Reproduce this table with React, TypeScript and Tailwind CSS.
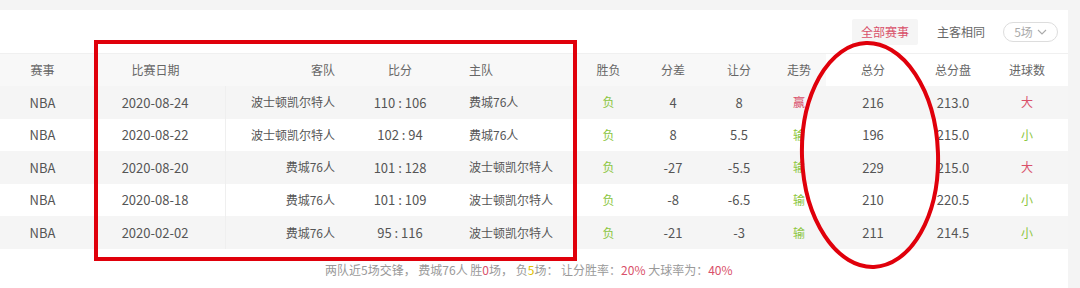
import React from 'react';

type Row = {
  league: string;
  date: string;
  away: string;
  score: string;
  home: string;
  result: string;
  diff: string;
  spread: string;
  trend: string;
  total: string;
  line: string;
  ou: string;
};

const rows: Row[] = [
  { league: 'NBA', date: '2020-08-24', away: '波士顿凯尔特人', score: '110 : 106', home: '费城76人', result: '负', diff: '4', spread: '8', trend: '赢', total: '216', line: '213.0', ou: '大' },
  { league: 'NBA', date: '2020-08-22', away: '波士顿凯尔特人', score: '102 : 94', home: '费城76人', result: '负', diff: '8', spread: '5.5', trend: '输', total: '196', line: '215.0', ou: '小' },
  { league: 'NBA', date: '2020-08-20', away: '费城76人', score: '101 : 128', home: '波士顿凯尔特人', result: '负', diff: '-27', spread: '-5.5', trend: '输', total: '229', line: '215.0', ou: '大' },
  { league: 'NBA', date: '2020-08-18', away: '费城76人', score: '101 : 109', home: '波士顿凯尔特人', result: '负', diff: '-8', spread: '-6.5', trend: '输', total: '210', line: '220.5', ou: '小' },
  { league: 'NBA', date: '2020-02-02', away: '费城76人', score: '95 : 116', home: '波士顿凯尔特人', result: '负', diff: '-21', spread: '-3', trend: '输', total: '211', line: '214.5', ou: '小' },
];

const RED = 'text-[#d9506a]';
const GREEN = 'text-[#8cc63f]';

// 赢 / 大 are red, everything else green
const tone = (v: string) => (v === '赢' || v === '大' ? RED : GREEN);

const App: React.FC = () => {
  return (
    <div
      className="relative w-[1080px] h-[288px] overflow-hidden bg-[#f4f4f4] pt-[10px] pr-[12px] text-[12px] text-[#555]"
      style={{ fontFamily: '"Noto Sans CJK SC", "Noto Sans", sans-serif' }}
    >
      <div className="h-full bg-white flex flex-col">
        {/* filters */}
        <div className="h-[43px] flex items-center justify-end pr-[10px]">
          <button className="h-[26px] px-[9px] bg-[#f5f5f5] text-[#d9506a] rounded-[2px]">全部赛事</button>
          <button className="h-[26px] px-[9px] ml-[10px] text-[#666]">主客相同</button>
          <button className="h-[20px] w-[55px] ml-[9px] border border-[#ddd] rounded-full text-[#aaa] flex items-center justify-center gap-[4px]">
            5场
            <svg width="10" height="6" viewBox="0 0 10 6" fill="none" stroke="#aaa" strokeWidth="1.1">
              <path d="M1 1l4 4 4-4" />
            </svg>
          </button>
        </div>

        {/* header */}
        <div className="flex h-[33px] items-center text-[#666] border-t border-[#f0f0f0]">
          <div className="flex h-full items-center bg-[#f8f8f8]">
            <div className="w-[85px] text-center">赛事</div>
            <div className="w-[141px] text-center">比赛日期</div>
            <div className="w-[119px] text-right pr-[10px]">客队</div>
            <div className="w-[110px] text-center">比分</div>
            <div className="w-[122px] pl-[14px]">主队</div>
            <div className="w-[63px] text-center">胜负</div>
            <div className="w-[66px] text-center">分差</div>
            <div className="w-[66px] text-center">让分</div>
            <div className="w-[54px] text-center">走势</div>
          </div>
          <div className="w-[94px] text-center">总分</div>
          <div className="w-[66px] text-center">总分盘</div>
          <div className="w-[82px] text-center">进球数</div>
        </div>

        {/* rows */}
        {rows.map((r, i) => (
          <div
            key={r.date}
            className={`flex h-[32.6px] items-center ${i % 2 === 0 ? 'bg-[#f5f5f5]' : 'bg-white'}`}
          >
            <div className="w-[85px] text-center text-[13px]">{r.league}</div>
            <div className="w-[141px] h-full flex items-center justify-center border-r border-[#efefef] text-[13px]">{r.date}</div>
            <div className="w-[119px] text-right pr-[10px]">{r.away}</div>
            <div className="w-[110px] text-center text-[13px]">{r.score}</div>
            <div className="w-[122px] pl-[14px]">{r.home}</div>
            <div className={`w-[63px] text-center ${GREEN}`}>{r.result}</div>
            <div className="w-[66px] text-center text-[13px]">{r.diff}</div>
            <div className="w-[66px] text-center text-[13px]">{r.spread}</div>
            <div className={`w-[54px] text-center ${tone(r.trend)}`}>{r.trend}</div>
            <div className="w-[94px] text-center text-[13px]">{r.total}</div>
            <div className="w-[66px] text-center text-[13px]">{r.line}</div>
            <div className={`w-[82px] text-center ${tone(r.ou)}`}>{r.ou}</div>
          </div>
        ))}

        {/* summary */}
        <div className="mt-[12px] text-[#999] pl-[325px]">
          两队近5场交锋， 费城76人 胜<span className={RED}>0</span>场， 负<span className="text-[#e0c000]">5</span>场： 让分胜率：<span className={RED}>20%</span> 大球率为：<span className={RED}>40%</span>
        </div>
      </div>

      {/* hand-drawn annotations */}
      <svg className="absolute left-0 top-0 pointer-events-none" width="1080" height="288">
        <rect x="96" y="42" width="479" height="217" fill="none" stroke="#e0000b" strokeWidth="4" />
        <ellipse cx="870" cy="155" rx="68" ry="112" fill="none" stroke="#e0000b" strokeWidth="4" transform="rotate(-2 870 155)" />
      </svg>
    </div>
  );
};

export default App;
